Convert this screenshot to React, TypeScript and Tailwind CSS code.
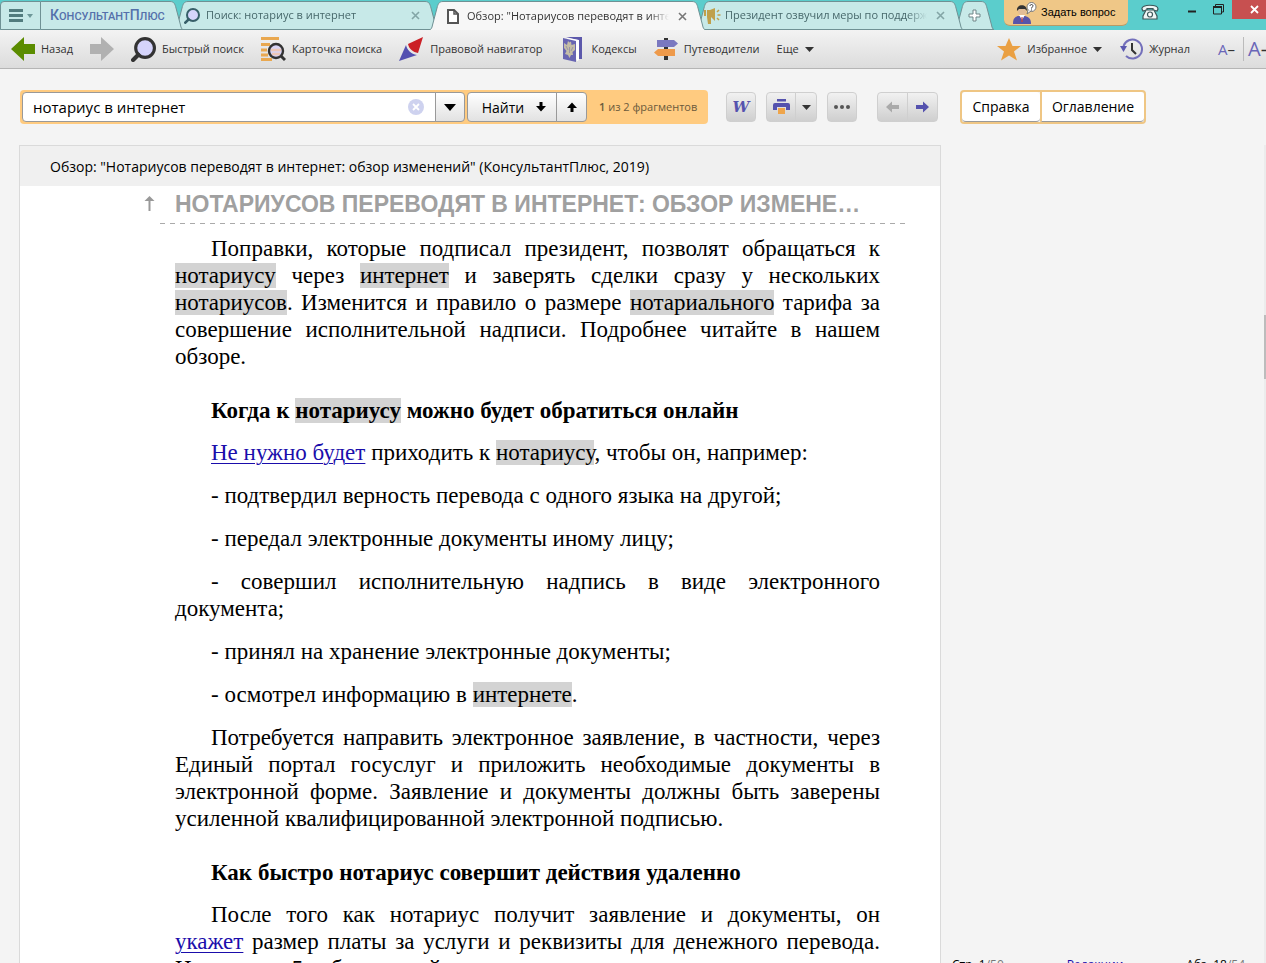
import type { ReactNode } from "react";

const uiFont = "font-['Open_Sans','Noto_Sans',sans-serif]";

type TabProps = {
  width: string;
  active?: boolean;
  closable?: boolean;
  layer: string;
  icon?: ReactNode;
  children?: ReactNode;
};

const TabEdge = ({ active, right }: { active?: boolean; right?: boolean }) => (
  <svg
    width="13"
    height="30"
    viewBox="0 0 13 30"
    className={`shrink-0 ${right ? "" : "-scale-x-100"}`}
    aria-hidden="true"
  >
    <path
      d="M0 1.5C4 1.5 5 4 6 8L10.5 25C11 28 12 29.5 13 29.5V30H0Z"
      fill={active ? "#f7f7f7" : "#c7e9e8"}
    />
    <path
      d="M0 1.5C4 1.5 5 4 6 8L10.5 25C11 28 12 29.5 13 29.5"
      fill="none"
      stroke="#6f9194"
    />
    {!active && <path d="M0 29.5H13" stroke="#6f9194" />}
  </svg>
);

const Tab = ({ width, active, closable, layer, icon, children }: TabProps) => (
  <div className={`relative -ml-2 flex h-[30px] shrink-0 ${width} ${layer}`}>
    <TabEdge active={active} />
    <div
      className={`relative mt-px flex min-w-0 flex-1 items-center border-t border-[#6f9194] ${
        active
          ? "bg-[#f7f7f7] text-[#333]"
          : "border-b bg-[#c7e9e8] text-[#47686b]"
      }`}
    >
      {icon}
      {children && (
        <button
          className={`min-w-0 flex-1 overflow-hidden text-left whitespace-nowrap ${
            closable ? "mask-r-from-90%" : ""
          }`}
        >
          {children}
        </button>
      )}
      {closable && (
        <button aria-label="Закрыть вкладку" className="mr-1 ml-2 shrink-0 p-px">
          <svg width="9" height="9" viewBox="0 0 9 9" aria-hidden="true">
            <path
              d="M1 1L8 8M8 1L1 8"
              stroke={active ? "#777" : "#83a5a6"}
              strokeWidth="1.6"
            />
          </svg>
        </button>
      )}
    </div>
    <TabEdge active={active} right />
  </div>
);

const Caret = ({ color = "#333" }: { color?: string }) => (
  <svg width="9" height="5" viewBox="0 0 9 5" className="shrink-0" aria-hidden="true">
    <path d="M0 0H9L4.5 5Z" fill={color} />
  </svg>
);

const Magnifier = ({ size, color }: { size: number; color: string }) => (
  <svg width={size} height={size} viewBox="0 0 24 24" className="shrink-0" aria-hidden="true">
    <circle cx="13.5" cy="10.5" r="9" fill="#d5d4fb" stroke={color} strokeWidth="3" />
    <path d="M7 17L2 22" stroke={color} strokeWidth="4" strokeLinecap="round" />
  </svg>
);

const CardSearchIcon = () => (
  <svg width="25" height="25" viewBox="0 0 25 25" aria-hidden="true">
    <path d="M0 1.5H18M0 7.5H9M0 13H6M0 18H7M0 22.5H11" stroke="#e9a850" strokeWidth="2.8" />
    <circle cx="15" cy="14" r="7" fill="#d9d5f5" stroke="#333" strokeWidth="2.4" />
    <path d="M10 13H20M11 17H19" stroke="#eec7b5" strokeWidth="2.5" />
    <path d="M20 19L24 23" stroke="#333" strokeWidth="3" />
  </svg>
);

const NavigatorIcon = () => (
  <svg width="25" height="24" viewBox="0 0 25 24" aria-hidden="true">
    <path d="M24 0L9 7C10 12 14 15 19 16Z" fill="#cb2026" />
    <path d="M7 8C8 13 12 17 18 18L0 24Z" fill="#5350b0" />
  </svg>
);

const CodexIcon = () => (
  <svg width="20" height="25" viewBox="0 0 20 25" className="mx-[3px]" aria-hidden="true">
    <path d="M3 0H19V22H15V3Z" fill="#5c58ab" />
    <path d="M4 1L16 3V23L14 24Z" fill="#fff" />
    <path d="M0 1L13 4V25L0 22Z" fill="#6865b2" />
    <path
      d="M5 4L6.5 5.5L8 4.5L8.5 8L12 7V13L9.500 15L10 18L8 18L6.500 21L5 18L2 17L3.500 14L1 11V6L4 8Z"
      fill="#c4bda7"
    />
    <path d="M6.5 10V16M3 9L5 13M10 10L8 14" stroke="#9a95a8" />
  </svg>
);

const GuideIcon = () => (
  <svg width="24" height="22" viewBox="0 0 24 22" aria-hidden="true">
    <path d="M10 0H14V2H10ZM10 9H14V11H10ZM10 18H14V22H10Z" fill="#333" />
    <path d="M3 2H20L24 5.5L20 9H3Z" fill="#7a78c0" />
    <path d="M21 11H4L0 14.5L4 18H21Z" fill="#ee9a4b" />
  </svg>
);

const BigArrow = ({ color, right }: { color: string; right?: boolean }) => (
  <svg
    width="24"
    height="24"
    viewBox="0 0 24 24"
    className={right ? "-scale-x-100" : ""}
    aria-hidden="true"
  >
    <path d="M0 12L13 0V7H24V17H13V24Z" fill={color} />
  </svg>
);

const HistoryIcon = () => (
  <svg width="23" height="22" viewBox="0 0 23 22" aria-hidden="true">
    <path
      d="M3.5 8A9.500 9.500 0 1 1 6 18"
      fill="none"
      stroke="#7470bb"
      strokeWidth="2"
    />
    <path d="M0 8L7 8L3.5 14Z" fill="#5b58b0" />
    <path d="M12 5V12L16 16" fill="none" stroke="#333" strokeWidth="2" />
  </svg>
);

const OperatorIcon = () => (
  <svg width="25" height="22" viewBox="0 0 25 22" aria-hidden="true">
    <path d="M1 22C1 16 3 15 6 14H13C17 15 19 17 19 22Z" fill="#5754aa" />
    <path d="M7 13L10 18L13 13Z" fill="#fff" />
    <path d="M9.5 15H10.5L11 20H9Z" fill="#b34754" />
    <circle cx="10" cy="9" r="4" fill="#e3bd97" />
    <path d="M5 9C4 2 15 1 15 9L13 7H7Z" fill="#333" />
    <circle cx="19.5" cy="5" r="4.5" fill="#fff" stroke="#777" />
    <path d="M16 8L15 12L19 9" fill="#fff" stroke="#777" />
    <path
      d="M18 4C18 2 21 2 21 4C21 5 19.5 5 19.5 6.5M19.5 7.5V8.5"
      fill="none"
      stroke="#333"
    />
  </svg>
);

const PhoneIcon = () => (
  <svg width="18" height="16" viewBox="0 0 18 16" aria-hidden="true">
    <path
      d="M1 5C0 0 17 0 17 5L16 7L12 6V4.5H6V6L2 7Z"
      fill="#eef5f5"
      stroke="#3c5759"
      strokeWidth="1.2"
    />
    <path d="M5 6H13L16 12V15H2V12Z" fill="#eef5f5" stroke="#3c5759" strokeWidth="1.2" />
    <circle cx="9" cy="10.5" r="2.5" fill="#fff" stroke="#3c5759" strokeWidth="1.2" />
  </svg>
);

const PrinterIcon = () => (
  <svg width="17" height="16" viewBox="0 0 17 16" aria-hidden="true">
    <path d="M4 0H13V2.5H4Z" fill="#5552ae" />
    <path d="M2 4H15Q17 4 17 6V11H13V8H4V11H0V6Q0 4 2 4Z" fill="#5552ae" />
    <path d="M5 9H12V15H5Z" fill="#efa54b" />
  </svg>
);

const SmallArrow = ({ color, turn = "" }: { color: string; turn?: string }) => (
  <svg width="13" height="12" viewBox="0 0 13 12" className={turn} aria-hidden="true">
    <path d="M13 6L7 0.500V4H0V8H7V11.500Z" fill={color} />
  </svg>
);

const FindArrow = ({ up }: { up?: boolean }) => (
  <svg width="10" height="10" viewBox="0 0 10 10" className={up ? "rotate-180" : ""} aria-hidden="true">
    <path d="M3.5 0H6.5V4H10L5 9.5L0 4H3.5Z" fill="#000" />
  </svg>
);

const TabBar = () => (
  <header className="flex h-[30px] shrink-0 overflow-hidden bg-[#5bcdcc] text-[11px]">
    <button
      aria-label="Меню"
      className="mt-px flex w-[41px] shrink-0 items-center justify-center gap-1 rounded-tl border border-[#6f9194] bg-[#c7e9e8]"
    >
      <svg width="14" height="14" viewBox="0 0 14 14" aria-hidden="true">
        <path d="M0 1.5H14M0 6.5H14M0 11.5H14" stroke="#527c7e" strokeWidth="3" />
      </svg>
      <svg width="6" height="4" viewBox="0 0 6 4" aria-hidden="true">
        <path d="M0 0H6L3 4Z" fill="#6d9799" />
      </svg>
    </button>
    <div className="relative z-20 flex h-[30px] w-[142px] shrink-0">
      <div className="mt-px flex min-w-0 flex-1 items-center border-t border-b border-[#6f9194] bg-[#c7e9e8] pl-[9px]">
        <a
          href="#"
          aria-label="КонсультантПлюс"
          className="flex items-baseline font-['Roboto',sans-serif] text-[14px] leading-4 font-medium whitespace-nowrap text-[#5470ab]"
        >
          К<span className="text-[11px]">ОНСУЛЬТАНТ</span>П
          <span className="text-[11px]">ЛЮС</span>
        </a>
      </div>
      <TabEdge right />
    </div>
    <Tab
      width="w-[263px]"
      layer="z-10"
      closable
      icon={
        <span className="mr-1.5 -ml-1">
          <Magnifier size={16} color="#375f69" />
        </span>
      }
    >
      Поиск: нотариус в интернет
    </Tab>
    <Tab
      width="w-[275px]"
      layer="z-30"
      active
      closable
      icon={
        <svg width="12" height="15" viewBox="0 0 12 15" className="mr-2 ml-1 shrink-0" aria-hidden="true">
          <path d="M1 1H7L11 5V14H1Z" fill="#fff" stroke="#555" strokeWidth="2" />
          <path d="M7 1V5H11" fill="none" stroke="#555" strokeWidth="1.5" />
        </svg>
      }
    >
      Обзор: "Нотариусов переводят в интернет
    </Tab>
    <Tab
      width="w-[266px]"
      layer="z-20"
      closable
      icon={
        <svg width="17" height="16" viewBox="0 0 17 16" className="mr-1 -ml-1.5 shrink-0" aria-hidden="true">
          <path d="M0 2H2V8H0ZM3 2H6L11 0V13L7 9V16H4L3 9Z" fill="#bfa04b" />
          <path d="M13 4L15 2M13.5 7H16.5M13 10L15 12" stroke="#bfa04b" strokeWidth="1.5" />
        </svg>
      }
    >
      Президент озвучил меры по поддержке
    </Tab>
    <Tab
      width="w-[39px]"
      layer="z-10"
      icon={
        <button aria-label="Новая вкладка" className="shrink-0">
          <svg width="13" height="13" viewBox="0 0 13 13" aria-hidden="true">
            <path d="M5 1H8V5H12V8H8V12H5V8H1V5H5Z" fill="#fff" stroke="#6f8587" />
          </svg>
        </button>
      }
    />
    <button className="ml-2.5 flex h-[26px] w-[124px] shrink-0 items-center gap-1 rounded-b-md border-b border-[#b69a66] bg-[#efc787] pl-2 font-['Liberation_Sans',sans-serif] whitespace-nowrap">
      <OperatorIcon />
      Задать вопрос
    </button>
    <div className="ml-auto flex shrink-0 items-start">
      <button aria-label="Телефон" className="mt-1 mr-7">
        <PhoneIcon />
      </button>
      <button aria-label="Свернуть" className="mt-2.5 mr-4">
        <svg width="10" height="3" viewBox="0 0 10 3" aria-hidden="true">
          <path d="M1 1.500H9" stroke="#222" strokeWidth="2" />
        </svg>
      </button>
      <button aria-label="Развернуть" className="mt-1 mr-2">
        <svg width="11" height="11" viewBox="0 0 11 11" aria-hidden="true">
          <path d="M2.5 2V0.5H10.5V8H9M0.5 3.5H8.5V10H0.5Z" fill="none" stroke="#222" />
          <path d="M0 3H9" stroke="#222" strokeWidth="2" />
        </svg>
      </button>
      <button
        aria-label="Закрыть"
        className="flex h-[19px] w-[34px] items-center bg-[#c75050] pl-[18px]"
      >
        <svg width="9" height="9" viewBox="0 0 9 9" className="shrink-0" aria-hidden="true">
          <path d="M1 1L8 8M8 1L1 8" stroke="#fff" strokeWidth="1.8" />
        </svg>
      </button>
    </div>
  </header>
);

const ToolButton = ({ icon, children }: { icon: ReactNode; children: ReactNode }) => (
  <button className="flex shrink-0 items-center gap-1.5 whitespace-nowrap">
    {icon}
    {children}
  </button>
);

const Toolbar = () => (
  <nav className="flex h-[39px] shrink-0 items-center overflow-hidden border-b border-[#b5b5b5] bg-linear-to-b from-[#f3f3f3] to-[#dcdcdc] pl-[11px] text-[11px] text-[#333]">
    <div className="flex items-center gap-[17px]">
      <ToolButton icon={<BigArrow color="#5b8c00" />}>Назад</ToolButton>
      <button aria-label="Вперёд">
        <BigArrow color="#b1b1b1" right />
      </button>
      <ToolButton icon={<Magnifier size={25} color="#333" />}>Быстрый поиск</ToolButton>
      <ToolButton icon={<CardSearchIcon />}>Карточка поиска</ToolButton>
      <ToolButton icon={<NavigatorIcon />}>Правовой навигатор</ToolButton>
      <ToolButton icon={<CodexIcon />}>Кодексы</ToolButton>
      <ToolButton icon={<GuideIcon />}>Путеводители</ToolButton>
      <button className="flex items-center gap-1.5">
        Еще <Caret />
      </button>
    </div>
    <div className="ml-auto flex shrink-0 items-center">
      <button className="flex items-center gap-1.5">
        <svg width="24" height="23" viewBox="0 0 24 23" aria-hidden="true">
          <path
            d="M12 0L15.5 8H24L17 13.5L20 22.5L12 17.5L4 22.5L7 13.5L0 8H8.5Z"
            fill="#eaa043"
          />
        </svg>
        Избранное <Caret />
      </button>
      <button className="ml-[18px] flex items-center gap-1.5">
        <HistoryIcon />
        Журнал
      </button>
      <button aria-label="Уменьшить шрифт" className="ml-7 flex text-[15px] text-[#6a66b8]">
        A<span className="text-[#333]">–</span>
      </button>
      <button
        aria-label="Увеличить шрифт"
        className="ml-2 flex h-6 w-[23px] items-center overflow-hidden border-l border-[#bbb] pl-1 text-[20px] text-[#6a66b8]"
      >
        A<span className="text-[#333]">–</span>
      </button>
    </div>
  </nav>
);

const greyButton =
  "flex h-[30px] items-center justify-center border border-[#cfcfcf] bg-linear-to-b from-[#f1f1f1] to-[#cfcfcf]";
const findButton =
  "flex h-[30px] items-center justify-center border border-[#999] bg-linear-to-b from-white to-[#e2e2e2]";

const SearchBar = () => (
  <div className="flex shrink-0 items-center px-5 pt-[21px] text-[14px] text-black">
    <div className="flex h-[34px] w-[688px] items-center rounded bg-[#ffcb80] p-0.5">
      <div className="flex h-[30px] w-[414px] items-center rounded-l border border-[#999] bg-white pr-[11px] pl-2.5">
        <input
          aria-label="Поиск в тексте"
          defaultValue="нотариус в интернет"
          className="min-w-0 flex-1 text-[15px] outline-none"
        />
        <button aria-label="Очистить">
          <svg width="16" height="16" viewBox="0 0 16 16" aria-hidden="true">
            <circle cx="8" cy="8" r="8" fill="#ced2ef" />
            <path d="M5 5L11 11M11 5L5 11" stroke="#fff" strokeWidth="1.8" />
          </svg>
        </button>
      </div>
      <button aria-label="История запросов" className={`${findButton} -ml-px w-[30px] rounded-r`}>
        <svg width="12" height="7" viewBox="0 0 12 7" aria-hidden="true">
          <path d="M0 0H12L6 7Z" fill="#000" />
        </svg>
      </button>
      <button className={`${findButton} ml-0.5 w-[90px] gap-3 rounded-l pl-1`}>
        Найти <FindArrow />
      </button>
      <button aria-label="Найти выше" className={`${findButton} -ml-px w-[31px] rounded-r`}>
        <FindArrow up />
      </button>
      <span className="ml-3 text-[11px] whitespace-nowrap text-[#6b5a3c]">
        <b className="font-semibold">1</b> из 2 фрагментов
      </span>
    </div>
    <button
      aria-label="Экспорт в Word"
      className={`${greyButton} ml-[18px] w-[30px] rounded font-['DejaVu_Serif',serif] text-[15px] font-bold text-[#5552ae] italic`}
    >
      W
    </button>
    <button aria-label="Печать" className={`${greyButton} ml-2.5 w-[30px] rounded-l`}>
      <PrinterIcon />
    </button>
    <button aria-label="Параметры печати" className={`${greyButton} -ml-px w-[22px] rounded-r`}>
      <Caret />
    </button>
    <button aria-label="Дополнительно" className={`${greyButton} ml-2.5 w-[30px] rounded`}>
      <svg width="16" height="4" viewBox="0 0 16 4" aria-hidden="true">
        <circle cx="2" cy="2" r="2" fill="#555" />
        <circle cx="8" cy="2" r="2" fill="#555" />
        <circle cx="14" cy="2" r="2" fill="#555" />
      </svg>
    </button>
    <button aria-label="Предыдущий" className={`${greyButton} ml-5 w-[31px] rounded-l`}>
      <SmallArrow color="#aaa" turn="-scale-x-100" />
    </button>
    <button aria-label="Следующий" className={`${greyButton} -ml-px w-[31px] rounded-r`}>
      <SmallArrow color="#5552ae" />
    </button>
    <div className="ml-[22px] flex h-[34px] rounded border-2 border-[#efc684]">
      <button className="w-[78px] rounded border-b border-[#999] bg-white">Справка</button>
      <button className="w-[104px] rounded-r border-b border-l-2 border-b-[#999] border-l-[#efc684] bg-white">
        Оглавление
      </button>
    </div>
  </div>
);

const Mark = ({ children }: { children: ReactNode }) => (
  <mark className="bg-[#d3d3d3] text-black">{children}</mark>
);

const DocLink = ({ children }: { children: ReactNode }) => (
  <a href="#" className="text-[#1a0dab] underline decoration-1 underline-offset-3">
    {children}
  </a>
);

const Article = () => (
  <article className="space-y-4 pt-[11px] pr-[60px] pl-[155px] text-justify indent-9 font-['Liberation_Serif',serif] text-[23px] leading-[27px] text-black">
    <p>
      Поправки, которые подписал президент, позволят обращаться к <Mark>нотариусу</Mark> через{" "}
      <Mark>интернет</Mark> и заверять сделки сразу у нескольких <Mark>нотариусов</Mark>.
      Изменится и правило о размере <Mark>нотариального</Mark> тарифа за совершение
      исполнительной надписи. Подробнее читайте в нашем обзоре.
    </p>
    <h2 className="mb-[15px] pt-[11px] font-bold">
      Когда к <Mark>нотариусу</Mark> можно будет обратиться онлайн
    </h2>
    <p>
      <DocLink>Не нужно будет</DocLink> приходить к <Mark>нотариусу</Mark>, чтобы он, например:
    </p>
    <p>- подтвердил верность перевода с одного языка на другой;</p>
    <p>- передал электронные документы иному лицу;</p>
    <p>- совершил исполнительную надпись в виде электронного документа;</p>
    <p>- принял на хранение электронные документы;</p>
    <p>
      - осмотрел информацию в <Mark>интернете</Mark>.
    </p>
    <p>
      Потребуется направить электронное заявление, в частности, через Единый портал госуслуг и
      приложить необходимые документы в электронной форме. Заявление и документы должны быть
      заверены усиленной квалифицированной электронной подписью.
    </p>
    <h2 className="mb-[15px] pt-[11px] font-bold">
      Как быстро нотариус совершит действия удаленно
    </h2>
    <p>
      После того как нотариус получит заявление и документы, он <DocLink>укажет</DocLink> размер
      платы за услуги и реквизиты для денежного перевода. На это есть 5 рабочих дней.
    </p>
  </article>
);

export default function App() {
  return (
    <div className={`flex h-screen flex-col overflow-hidden bg-[#f4f4f4] ${uiFont}`}>
      <TabBar />
      <Toolbar />
      <SearchBar />
      <div className="mt-[21px] flex min-h-0 flex-1 overflow-hidden pl-[19px]">
        <main className="w-[922px] shrink-0 overflow-hidden border border-b-0 border-[#dadada] bg-white">
          <div className="flex h-10 items-center bg-[#f0f0f0] pl-[30px] text-[14px] text-black">
            Обзор: "Нотариусов переводят в интернет: обзор изменений" (КонсультантПлюс, 2019)
          </div>
          <div className="flex h-[38px] pl-[124px]">
            <button aria-label="К началу" className="w-4 self-center pb-1">
              <svg width="11" height="15" viewBox="0 0 11 15" aria-hidden="true">
                <path d="M5.5 15V2" stroke="#999" strokeWidth="2" />
                <path d="M5.5 0L10.5 5H0.5Z" fill="#999" />
              </svg>
            </button>
            <div className="w-[745px]">
              <h1 className="truncate pr-[42px] pl-[15px] font-['Liberation_Sans',sans-serif] text-[23px] leading-[37px] font-bold text-[#a0a0a0]">
                НОТАРИУСОВ ПЕРЕВОДЯТ В ИНТЕРНЕТ: ОБЗОР ИЗМЕНЕНИЙ
              </h1>
              <div className="h-px bg-[repeating-linear-gradient(90deg,#aaa_0_5px,transparent_5px_10px)]" />
            </div>
          </div>
          <Article />
        </main>
        <aside className="flex min-w-0 flex-1">
          <footer className="flex h-1.5 flex-1 items-start justify-between self-end overflow-hidden pr-[19px] pl-[11px] text-[12px] leading-4 text-black">
            <span>
              Стр. 1<span className="text-[#777]">/50</span>
            </span>
            <a href="#" className="text-[#1a0dab]">
              Редакции
            </a>
            <span>
              Абз. 18<span className="text-[#777]">/54</span>
            </span>
          </footer>
          <div className="w-0.5 bg-[#ececec] pt-[170px]">
            <div className="h-16 bg-[#bcbcbc]" />
          </div>
        </aside>
      </div>
    </div>
  );
}
